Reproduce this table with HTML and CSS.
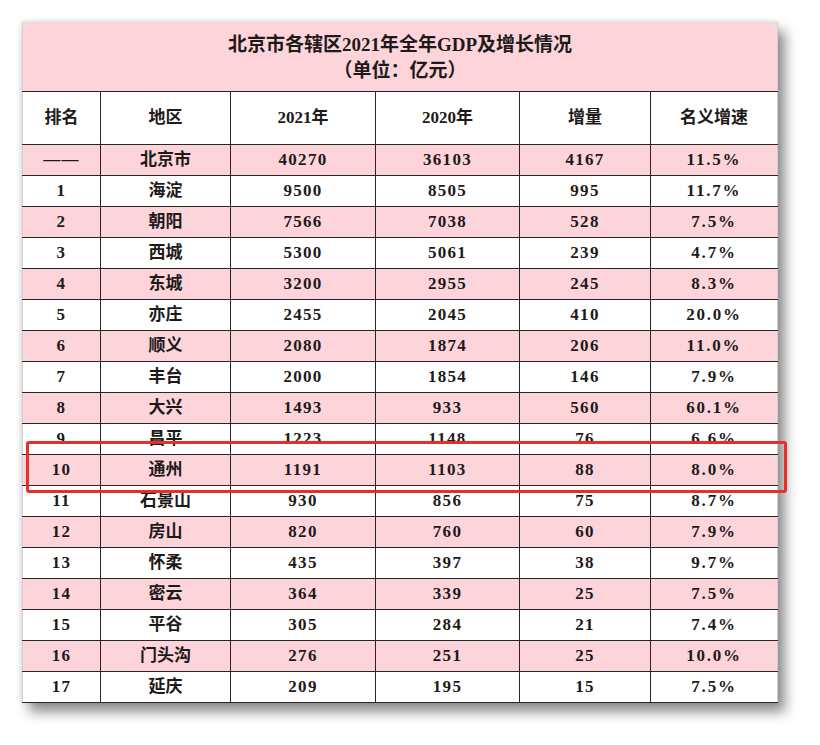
FILE: index.html
```html
<!DOCTYPE html>
<html lang="zh-CN">
<head>
<meta charset="utf-8">
<title>北京市各辖区2021年全年GDP及增长情况</title>
<link rel="stylesheet" href="styles.css">
</head>
<body>
<div class="page">
  <div class="sheet">
    <table class="gdp">
      <colgroup>
        <col class="c1"><col class="c2"><col class="c3"><col class="c4"><col class="c5"><col class="c6">
      </colgroup>
      <thead>
        <tr class="title-row">
          <th colspan="6" class="title">北京市各辖区2021年全年GDP及增长情况<br>（单位：亿元）</th>
        </tr>
        <tr class="head-row">
          <th>排名</th><th>地区</th><th>2021年</th><th>2020年</th><th>增量</th><th>名义增速</th>
        </tr>
      </thead>
      <tbody>
        <tr class="pink"><td>——</td><td>北京市</td><td>40270</td><td>36103</td><td>4167</td><td>11.5%</td></tr>
        <tr><td>1</td><td>海淀</td><td>9500</td><td>8505</td><td>995</td><td>11.7%</td></tr>
        <tr class="pink"><td>2</td><td>朝阳</td><td>7566</td><td>7038</td><td>528</td><td>7.5%</td></tr>
        <tr><td>3</td><td>西城</td><td>5300</td><td>5061</td><td>239</td><td>4.7%</td></tr>
        <tr class="pink"><td>4</td><td>东城</td><td>3200</td><td>2955</td><td>245</td><td>8.3%</td></tr>
        <tr><td>5</td><td>亦庄</td><td>2455</td><td>2045</td><td>410</td><td>20.0%</td></tr>
        <tr class="pink"><td>6</td><td>顺义</td><td>2080</td><td>1874</td><td>206</td><td>11.0%</td></tr>
        <tr><td>7</td><td>丰台</td><td>2000</td><td>1854</td><td>146</td><td>7.9%</td></tr>
        <tr class="pink"><td>8</td><td>大兴</td><td>1493</td><td>933</td><td>560</td><td>60.1%</td></tr>
        <tr><td>9</td><td>昌平</td><td>1223</td><td>1148</td><td>76</td><td>6.6%</td></tr>
        <tr class="pink"><td>10</td><td>通州</td><td>1191</td><td>1103</td><td>88</td><td>8.0%</td></tr>
        <tr><td>11</td><td>石景山</td><td>930</td><td>856</td><td>75</td><td>8.7%</td></tr>
        <tr class="pink"><td>12</td><td>房山</td><td>820</td><td>760</td><td>60</td><td>7.9%</td></tr>
        <tr><td>13</td><td>怀柔</td><td>435</td><td>397</td><td>38</td><td>9.7%</td></tr>
        <tr class="pink"><td>14</td><td>密云</td><td>364</td><td>339</td><td>25</td><td>7.5%</td></tr>
        <tr><td>15</td><td>平谷</td><td>305</td><td>284</td><td>21</td><td>7.4%</td></tr>
        <tr class="pink"><td>16</td><td>门头沟</td><td>276</td><td>251</td><td>25</td><td>10.0%</td></tr>
        <tr><td>17</td><td>延庆</td><td>209</td><td>195</td><td>15</td><td>7.5%</td></tr>
      </tbody>
    </table>
    <div class="highlight"></div>
  </div>
</div>
</body>
</html>
```

FILE: styles.css
```css
html, body {
  margin: 0;
  padding: 0;
  background: #ffffff;
}

.page {
  width: 820px;
  height: 745px;
  padding: 22px 0 0 22px;
  box-sizing: border-box;
  overflow: hidden;
}

.sheet {
  position: relative;
  width: 755px;
}

.gdp {
  width: 755px;
  border-collapse: collapse;
  table-layout: fixed;
  font-family: "Liberation Serif", "Noto Sans CJK SC", serif;
  color: #1e1a1a;
  box-shadow: 7px 9px 12px rgba(0, 0, 0, 0.45), -1px -1px 5px rgba(0, 0, 0, 0.12);
  background: #ffffff;
}

.c1 { width: 78px; }
.c2 { width: 130px; }
.c3 { width: 145px; }
.c4 { width: 144px; }
.c5 { width: 131px; }
.c6 { width: 127px; }

.gdp th,
.gdp td {
  border: 1px solid #2b2626;
  padding: 0;
  text-align: center;
  vertical-align: middle;
  font-size: 17px;
  font-weight: 700;
  line-height: 20px;
}

.gdp td {
  height: 30px;
  letter-spacing: 1.3px;
}

.gdp td:nth-child(2) {
  letter-spacing: 0;
}

.gdp td:last-child {
  letter-spacing: 1.8px;
}

.gdp tr > :first-child { border-left: 1px solid #d8d0d0; }
.gdp tr > :last-child { border-right: 1px solid #d8d0d0; }

.title-row .title {
  height: 66px;
  background: #fcd4da;
  font-size: 19px;
  line-height: 26px;
  border-top: 1px solid #e6dede;
  border-left: 1px solid #d8d0d0;
  border-right: 1px solid #d8d0d0;
  padding-top: 2px;
}

.head-row th {
  height: 52px;
  background: #ffffff;
}

.pink td {
  background: #fcd4da;
}

.highlight {
  position: absolute;
  left: 4px;
  top: 419px;
  width: 761px;
  height: 52px;
  box-sizing: border-box;
  border: 3px solid #e5302a;
  border-radius: 3px;
}
```
